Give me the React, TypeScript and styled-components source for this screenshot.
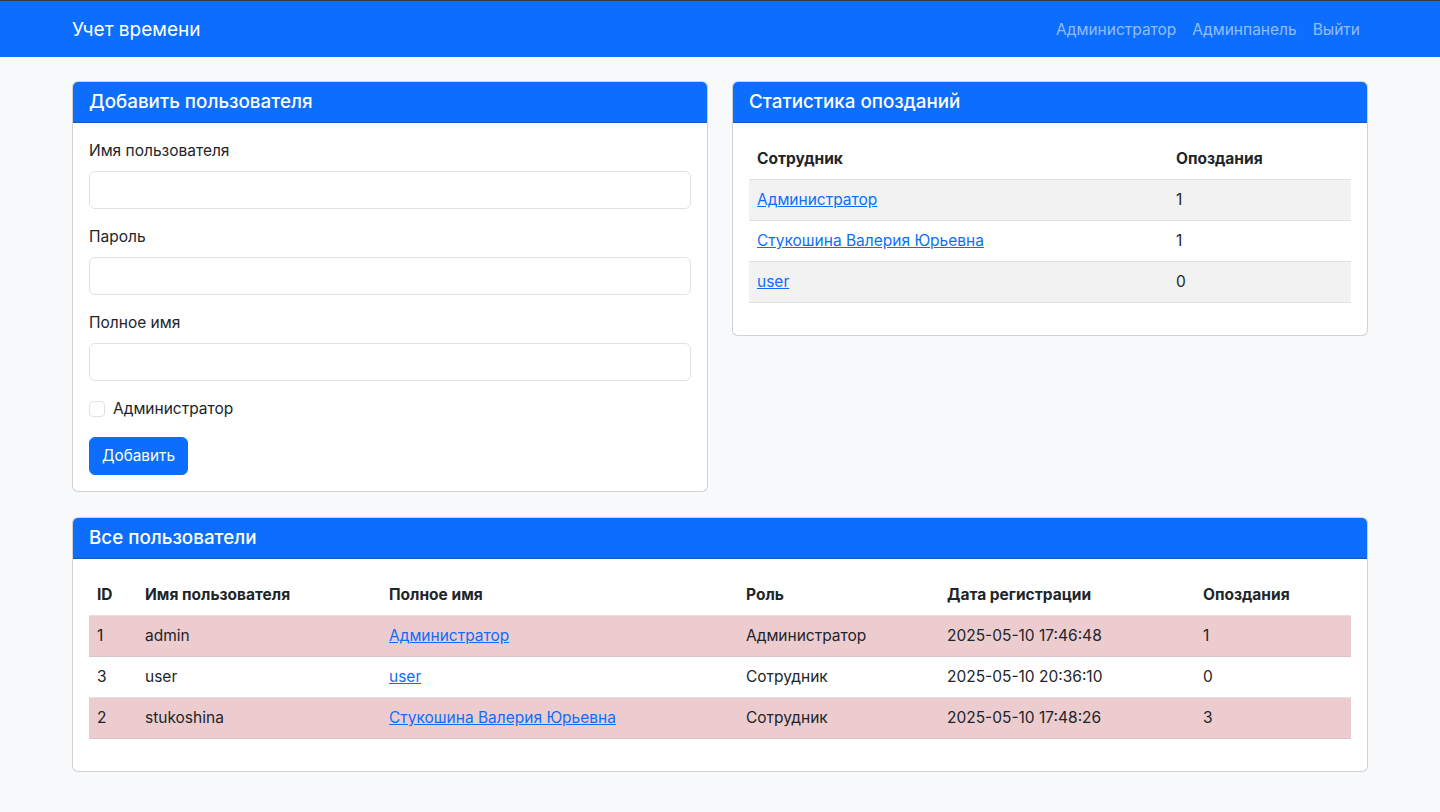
import React from 'react';
import styled, { createGlobalStyle } from 'styled-components';

const Color = {
  Primary: '#0d6efd',
  Body: '#212529',
  Page: '#f8f9fa',
  Border: '#dee2e6',
  CardBorder: 'rgba(0, 0, 0, 0.175)',
  Stripe: '#f2f2f2',
  Danger: '#eccccf',
  DangerBorder: '#dcc3c5',
};

const GlobalStyle = createGlobalStyle`
  * { box-sizing: border-box; }
  body {
    margin: 0;
    background: ${Color.Page};
    color: ${Color.Body};
    font-family: Inter, "Noto Sans", "Liberation Sans", sans-serif;
    font-size: 16px;
    line-height: 1.5;
  }
`;

const Nav = styled.nav`
  background: ${Color.Primary};
  border-top: 1px solid #3a3a3a;
  padding: 9px 0 7px;
`;

const Container = styled.div`
  width: 1320px;
  margin: 0 auto;
  padding: 0 12px;
`;

const NavInner = styled(Container)`
  display: flex;
  align-items: center;
  justify-content: space-between;
`;

const Brand = styled.a`
  color: #fff;
  font-size: 19px;
  line-height: 30px;
  padding: 5px 0;
  text-decoration: none;
`;

const NavLinks = styled.div`
  display: flex;
`;

const NavLink = styled.a`
  color: rgba(255, 255, 255, 0.55);
  padding: 8px;
  text-decoration: none;
  font-size: 15.5px;
`;

const Main = styled(Container)`
  padding-top: 24px;
  padding-bottom: 40px;
  display: flex;
  flex-direction: column;
  gap: 25px;
`;

const Row = styled.div`
  display: grid;
  grid-template-columns: 1fr 1fr;
  gap: 24px;
  align-items: start;
`;

const Card = styled.section`
  background: #fff;
  border: 1px solid ${Color.CardBorder};
  border-radius: 6px;
  overflow: hidden;
`;

const CardHeader = styled.header`
  background: ${Color.Primary};
  color: #fff;
  padding: 8px 16px;
  border-bottom: 1px solid rgba(0, 0, 0, 0.175);
`;

const CardTitle = styled.h5`
  margin: 0;
  font-size: 18.8px;
  font-weight: 500;
  line-height: 24px;
`;

const CardBody = styled.div`
  padding: 16px;
`;

const Field = styled.div`
  margin-bottom: 16px;
`;

const Label = styled.label`
  display: block;
  margin-bottom: 8px;
  font-size: 15.5px;
  line-height: 24px;
`;

const Input = styled.input`
  display: block;
  width: 100%;
  height: 38px;
  padding: 6px 12px;
  border: 1px solid ${Color.Border};
  border-radius: 6px;
  font: inherit;
  background: #fff;
`;

const CheckRow = styled.label`
  display: flex;
  align-items: center;
  gap: 8px;
  height: 24px;
  margin-bottom: 16px;
  font-size: 15.5px;
`;

const CheckBox = styled.span`
  width: 16px;
  height: 16px;
  border: 1px solid ${Color.Border};
  border-radius: 4px;
  background: #fff;
`;

const Button = styled.button`
  background: ${Color.Primary};
  color: #fff;
  border: 1px solid ${Color.Primary};
  border-radius: 6px;
  padding: 6px 12px;
  height: 38px;
  font: inherit;
  font-size: 15.3px;
`;

const Table = styled.table`
  width: 100%;
  border-collapse: collapse;
  margin-bottom: 16px;
  font-size: 15.5px;
`;

const Th = styled.th`
  text-align: left;
  font-weight: 700;
  padding: 8px;
  line-height: 24px;
  border-bottom: 1px solid ${Color.Border};
`;

const Tr = styled.tr<{ $bg?: string; $line?: string }>`
  background: ${(p) => p.$bg || '#fff'};
  & > td {
    border-bottom: 1px solid ${(p) => p.$line || Color.Border};
  }
`;

const Td = styled.td`
  padding: 8px;
  line-height: 24px;
`;

const Link = styled.a`
  color: ${Color.Primary};
  text-decoration: underline;
`;

const stats = [
  { name: 'Администратор', late: 1 },
  { name: 'Стукошина Валерия Юрьевна', late: 1 },
  { name: 'user', late: 0 },
];

const users = [
  { id: 1, login: 'admin', name: 'Администратор', role: 'Администратор', date: '2025-05-10 17:46:48', late: 1, danger: true },
  { id: 3, login: 'user', name: 'user', role: 'Сотрудник', date: '2025-05-10 20:36:10', late: 0, danger: false },
  { id: 2, login: 'stukoshina', name: 'Стукошина Валерия Юрьевна', role: 'Сотрудник', date: '2025-05-10 17:48:26', late: 3, danger: true },
];

export default function App() {
  return (
    <>
      <GlobalStyle />
      <Nav>
        <NavInner>
          <Brand href="#">Учет времени</Brand>
          <NavLinks>
            <NavLink href="#">Администратор</NavLink>
            <NavLink href="#">Админпанель</NavLink>
            <NavLink href="#">Выйти</NavLink>
          </NavLinks>
        </NavInner>
      </Nav>
      <Main>
        <Row>
          <Card>
            <CardHeader>
              <CardTitle>Добавить пользователя</CardTitle>
            </CardHeader>
            <CardBody>
              <Field>
                <Label>Имя пользователя</Label>
                <Input />
              </Field>
              <Field>
                <Label>Пароль</Label>
                <Input type="password" />
              </Field>
              <Field>
                <Label>Полное имя</Label>
                <Input />
              </Field>
              <CheckRow>
                <CheckBox />
                Администратор
              </CheckRow>
              <Button>Добавить</Button>
            </CardBody>
          </Card>
          <Card>
            <CardHeader>
              <CardTitle>Статистика опозданий</CardTitle>
            </CardHeader>
            <CardBody>
              <Table>
                <colgroup>
                  <col style={{ width: 419 }} />
                  <col />
                </colgroup>
                <thead>
                  <tr>
                    <Th>Сотрудник</Th>
                    <Th>Опоздания</Th>
                  </tr>
                </thead>
                <tbody>
                  {stats.map((s, i) => (
                    <Tr key={s.name} $bg={i % 2 === 0 ? Color.Stripe : '#fff'}>
                      <Td>
                        <Link href="#">{s.name}</Link>
                      </Td>
                      <Td>{s.late}</Td>
                    </Tr>
                  ))}
                </tbody>
              </Table>
            </CardBody>
          </Card>
        </Row>
        <Card>
          <CardHeader>
            <CardTitle>Все пользователи</CardTitle>
          </CardHeader>
          <CardBody>
            <Table>
              <colgroup>
                <col style={{ width: 48 }} />
                <col style={{ width: 244 }} />
                <col style={{ width: 357 }} />
                <col style={{ width: 201 }} />
                <col style={{ width: 256 }} />
                <col />
              </colgroup>
              <thead>
                <tr>
                  <Th>ID</Th>
                  <Th>Имя пользователя</Th>
                  <Th>Полное имя</Th>
                  <Th>Роль</Th>
                  <Th>Дата регистрации</Th>
                  <Th>Опоздания</Th>
                </tr>
              </thead>
              <tbody>
                {users.map((u) => (
                  <Tr
                    key={u.id}
                    $bg={u.danger ? Color.Danger : '#fff'}
                    $line={u.danger ? Color.DangerBorder : Color.Border}
                  >
                    <Td>{u.id}</Td>
                    <Td>{u.login}</Td>
                    <Td>
                      <Link href="#">{u.name}</Link>
                    </Td>
                    <Td>{u.role}</Td>
                    <Td>{u.date}</Td>
                    <Td>{u.late}</Td>
                  </Tr>
                ))}
              </tbody>
            </Table>
          </CardBody>
        </Card>
      </Main>
    </>
  );
}
